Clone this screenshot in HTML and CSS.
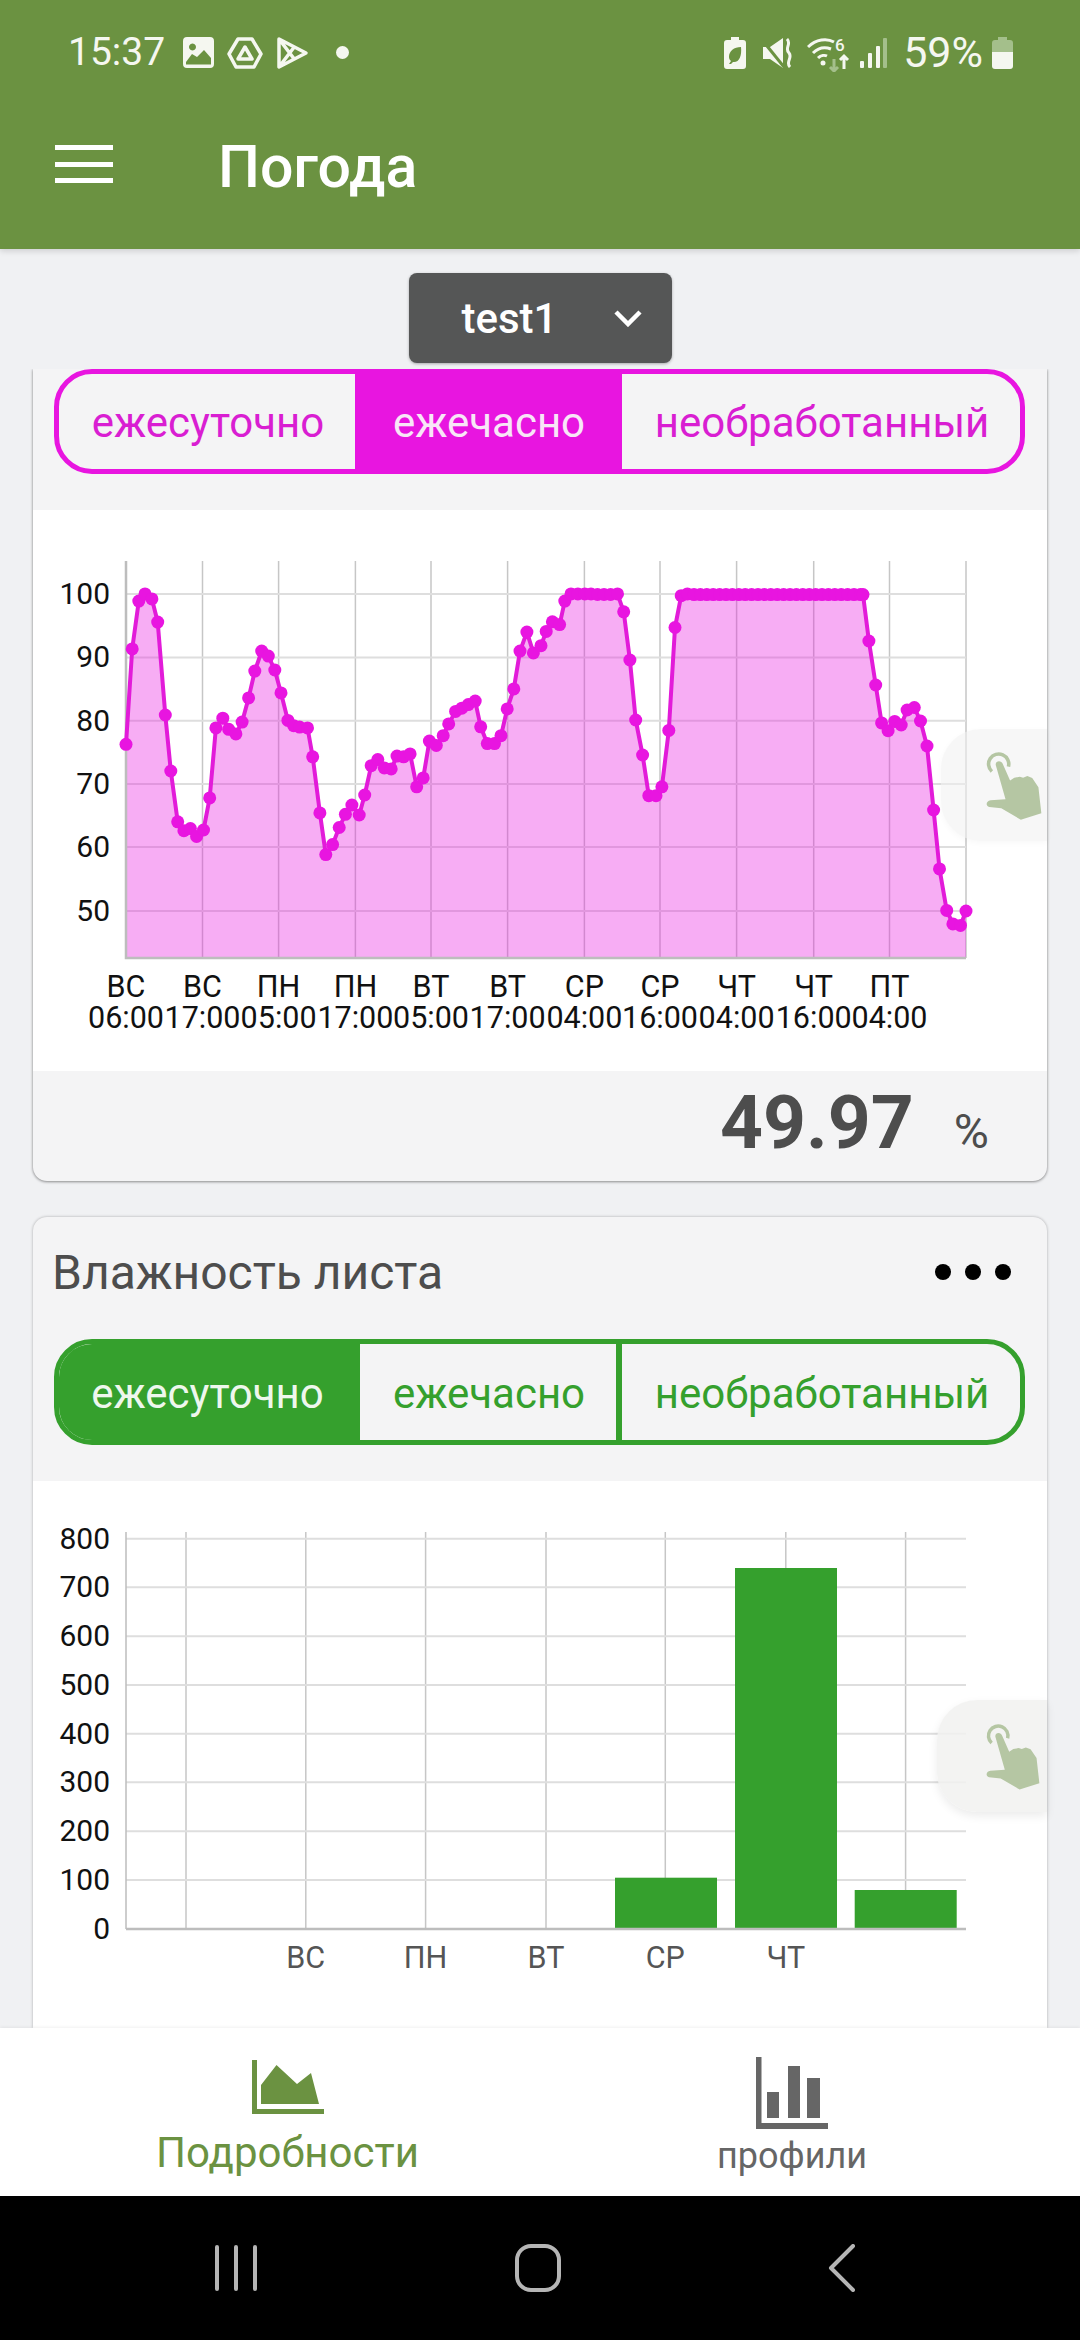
FILE: index.html
```html
<!DOCTYPE html>
<html lang="ru">
<head>
    <meta charset="UTF-8">
    <meta name="viewport" content="width=device-width, initial-scale=1.0">
    <title>Погода</title>
    <link rel="stylesheet" href="styles.css">
</head>
<body>
    <svg class="defs" width="0" height="0">
        <defs>
            <marker id="dot" markerUnits="userSpaceOnUse" markerWidth="14" markerHeight="14" refX="7" refY="7">
                <circle cx="7" cy="7" r="6.500" fill="#e815e0"/>
            </marker>
            <symbol id="hand" viewBox="155 145 175 220">
                <path d="M176 212A31 31 0 1 1 227 197" fill="none" stroke="currentColor" stroke-width="11"/>
                <path d="M188 192C186 178 206 176 210 190L232 240L245 231L262 228L272 231L285 226L300 232L319 260L328 340L265 360L205 325L168 321C156 318 158 302 172 300L218 297Z" fill="currentColor"/>
            </symbol>
        </defs>
    </svg>

    <div class="page">
        <header class="app-header">
            <div class="status-bar">
                <div class="status-left">
                    <span class="clock">15:37</span>
                    <svg class="st-icon" width="31" height="31" viewBox="0 0 31 31"><path fill-rule="evenodd" d="M4 0H27A4 4 0 0 1 31 4V27A4 4 0 0 1 27 31H4A4 4 0 0 1 0 27V4A4 4 0 0 1 4 0ZM3 25V27.500H28V21L21 13L14 20L9 17ZM9.500 6.500A3.500 3.500 0 1 0 9.510 6.500Z"/></svg>
                    <svg class="st-line" width="36" height="32" viewBox="0 0 36 32"><path d="M11 2H25L34 17L27 30H9L2 17Z M18 10L25 22H11Z"/></svg>
                    <svg class="st-line play" width="33" height="34" viewBox="0 0 33 34"><path d="M3 3L30 17L3 31Z M3 3L19 24 M3 31L19 10"/></svg>
                    <span class="st-dot"></span>
                </div>
                <div class="status-right">
                    <svg class="st-icon leaf" width="22" height="32" viewBox="0 0 22 32"><path fill-rule="evenodd" d="M7 0H15V3H19A3 3 0 0 1 22 6V29A3 3 0 0 1 19 32H3A3 3 0 0 1 0 29V6A3 3 0 0 1 3 3H7ZM17 10C10 10 5 14 5 20C5 22 6 23 7 24L5 27L7 27L9 25C15 26 18 19 17 10Z"/></svg>
                    <svg class="st-icon" width="30" height="30" viewBox="0 0 30 30"><path d="M0 9H7L20 0V30L7 21H0Z"/><path d="M0 3L21 29" stroke="#6b9241" stroke-width="3"/><path d="M24 1C29 6 21 10 26 15C30 20 22 24 27 29" fill="none" stroke="#f5f7f0" stroke-width="3"/></svg>
                    <svg class="wifi" width="43" height="38" viewBox="0 -4 43 38"><path class="wifi-arc" d="M1 9C9 1 20 0 27 4M6 15C12 9 19 9 24 11M11 20C14 17 18 17 20 18"/><circle class="wifi-dot" cx="16" cy="25" r="2.500"/><text class="wifi-six" x="28" y="13">6</text><path class="wifi-up" d="M37 31V18M33 22L37 18L41 22"/><path class="wifi-down" d="M27 33V21M23 29L27 33L31 29"/></svg>
                    <svg class="signal" width="27" height="30" viewBox="0 0 27 30"><rect x="0" y="23" width="4" height="7" rx="1"/><rect x="8" y="15" width="4" height="15" rx="1"/><rect x="16" y="8" width="4" height="22" rx="1"/><rect class="signal-off" x="23" y="0" width="4" height="30" rx="1"/></svg>
                    <span class="battery-text">59%</span>
                    <svg class="battery" width="21" height="32" viewBox="0 0 21 32"><path class="battery-off" d="M6 0H15V3H18A3 3 0 0 1 21 6V15H0V6A3 3 0 0 1 3 3H6Z"/><path class="battery-on" d="M0 15H21V29A3 3 0 0 1 18 32H3A3 3 0 0 1 0 29Z"/></svg>
                </div>
            </div>
            <div class="toolbar">
                <div class="menu-icon"><span></span><span></span><span></span></div>
                <h1 class="app-title">Погода</h1>
            </div>
        </header>

        <div class="picker-row">
            <div class="picker">
                <span>test1</span>
                <svg width="30" height="18" viewBox="0 0 30 18"><path d="M3 3L15 15L27 3" fill="none" stroke="#fff" stroke-width="4.500"/></svg>
            </div>
        </div>

        <main class="scroll-area">
            <section class="card card-first">
                <div class="segments seg-pink">
                    <button class="seg">ежесуточно</button>
                    <button class="seg active">ежечасно</button>
                    <button class="seg">необработанный</button>
                </div>
                <div class="chart-box chart-box-line">
                    <svg class="chart" width="1014" height="561" viewBox="33 510 1014 561">
                        <path class="grid-v" d="M202.500 561V958M278.600 561V958M355.400 561V958M431 561V958M507.600 561V958M584.400 561V958M660 561V958M736.600 561V958M813.700 561V958M889.500 561V958M966 561V958"/>
                        <path class="grid-h" d="M126 594H966M126 657.500H966M126 720.700H966M126 784H966M126 847H966M126 911H966"/>
                        <polygon class="area" points="126,958 126,744.300 132.200,648.900 138.800,601.100 145,593.900 151.900,598.900 157.700,622.100 165.300,715 170.800,771 177.700,821.800 183.900,830.700 190.400,828.600 196.600,836.400 203.500,830 209.700,797.900 215.900,727.900 222.800,718.200 228.700,729.300 235.900,733.900 242.100,722.100 248.600,697.900 254.800,671.100 261.700,651.100 268.300,656.100 274.800,670 281,692.900 287.900,720.400 293.700,725.700 299.600,727.100 307.500,727.900 312.700,756.800 319.900,812.900 325.800,854.600 332.600,844.600 339.200,827.500 345.400,814.300 351.900,805 359.200,815 364.700,795 371.200,765.700 377.800,759.600 384.300,767.900 391.200,768.900 397,756.100 403.600,756.800 410.100,753.900 416.700,786.800 423.200,777.900 429.400,741.100 436.300,745.400 443.200,735.700 448.700,723.900 455.600,711.400 461.800,708.200 468.300,704.600 475.200,701.100 480.700,726.800 487.300,743.600 494.500,743.600 501,735.700 507.200,708.900 513.800,688.900 520,651.100 526.900,632.100 533.400,652.900 541,645.700 546.200,631.400 552.400,621.800 559.600,624.600 564.800,601.100 571,593.900 577.900,593.900 584.800,593.900 591,594 597.500,594.500 604,594.500 610.600,594.500 617.500,593.900 623.700,611.800 629.900,660 635.700,720 642.600,755 648.800,795.700 656,795.700 661.900,786.800 668.800,730.400 675,627.500 681.200,595.700 687.400,593.900 863,594.600 868.900,641 875.700,685 881.600,722.900 888.100,730.700 894.700,721.400 901.200,725 907.100,710 914.300,707.500 920.500,721 927,746 933.600,810 939.500,868.900 946.700,910.400 952.900,923.900 960.500,925.400 966,911 966,958"/>
                        <path class="axis" d="M126 561V958H966"/>
                        <polyline class="line" points="126,744.300 132.200,648.900 138.800,601.100 145,593.900 151.900,598.900 157.700,622.100 165.300,715 170.800,771 177.700,821.800 183.900,830.700 190.400,828.600 196.600,836.400 203.500,830 209.700,797.900 215.900,727.900 222.800,718.200 228.700,729.300 235.900,733.900 242.100,722.100 248.600,697.900 254.800,671.100 261.700,651.100 268.300,656.100 274.800,670 281,692.900 287.900,720.400 293.700,725.700 299.600,727.100 307.500,727.900 312.700,756.800 319.900,812.900 325.800,854.600 332.600,844.600 339.200,827.500 345.400,814.300 351.900,805 359.200,815 364.700,795 371.200,765.700 377.800,759.600 384.300,767.900 391.200,768.900 397,756.100 403.600,756.800 410.100,753.900 416.700,786.800 423.200,777.900 429.400,741.100 436.300,745.400 443.200,735.700 448.700,723.900 455.600,711.400 461.800,708.200 468.300,704.600 475.200,701.100 480.700,726.800 487.300,743.600 494.500,743.600 501,735.700 507.200,708.900 513.800,688.900 520,651.100 526.900,632.100 533.400,652.900 541,645.700 546.200,631.400 552.400,621.800 559.600,624.600 564.800,601.100 571,593.900 577.900,593.900 584.800,593.900 591,594 597.500,594.500 604,594.500 610.600,594.500 617.500,593.900 623.700,611.800 629.900,660 635.700,720 642.600,755 648.800,795.700 656,795.700 661.900,786.800 668.800,730.400 675,627.500 681.200,595.700 687.400,593.900 694,594.600 700.400,594.600 706.800,594.600 713.200,594.600 719.600,594.600 726,594.600 732.400,594.600 738.800,594.600 745.200,594.600 751.600,594.600 758,594.600 764.400,594.600 770.800,594.600 777.200,594.600 783.600,594.600 790,594.600 796.400,594.600 802.800,594.600 809.200,594.600 815.600,594.600 822,594.600 828.400,594.600 834.800,594.600 841.200,594.600 847.600,594.600 854,594.600 860.400,594.600 863,594.600 868.900,641 875.700,685 881.600,722.900 888.100,730.700 894.700,721.400 901.200,725 907.100,710 914.300,707.500 920.500,721 927,746 933.600,810 939.500,868.900 946.700,910.400 952.900,923.900 960.500,925.400 966,911"/>
                        <g class="y-labels">
                            <text x="110" y="604">100</text><text x="110" y="667">90</text><text x="110" y="731">80</text><text x="110" y="794">70</text><text x="110" y="857">60</text><text x="110" y="921">50</text>
                        </g>
                        <g class="x-labels">
                            <text x="126" y="997">ВС</text><text x="126" y="1028">06:00</text>
                            <text x="202.500" y="997">ВС</text><text x="202.500" y="1028">17:00</text>
                            <text x="278.600" y="997">ПН</text><text x="278.600" y="1028">05:00</text>
                            <text x="355.400" y="997">ПН</text><text x="355.400" y="1028">17:00</text>
                            <text x="431" y="997">ВТ</text><text x="431" y="1028">05:00</text>
                            <text x="507.600" y="997">ВТ</text><text x="507.600" y="1028">17:00</text>
                            <text x="584.400" y="997">СР</text><text x="584.400" y="1028">04:00</text>
                            <text x="660" y="997">СР</text><text x="660" y="1028">16:00</text>
                            <text x="736.600" y="997">ЧТ</text><text x="736.600" y="1028">04:00</text>
                            <text x="813.700" y="997">ЧТ</text><text x="813.700" y="1028">16:00</text>
                            <text x="889.500" y="997">ПТ</text><text x="889.500" y="1028">04:00</text>
                        </g>
                    </svg>
                    <div class="hand-tab hand-tab-1"><svg width="57" height="73"><use href="#hand"/></svg></div>
                </div>
                <div class="card-footer">
                    <span class="value">49.97</span>
                    <span class="unit">%</span>
                </div>
            </section>

            <section class="card card-second">
                <div class="card-head">
                    <h2>Влажность листа</h2>
                    <div class="dots"><span></span><span></span><span></span></div>
                </div>
                <div class="segments seg-green">
                    <button class="seg active">ежесуточно</button>
                    <button class="seg">ежечасно</button>
                    <button class="seg">необработанный</button>
                </div>
                <div class="chart-box chart-box-bar">
                    <svg class="chart" width="1014" height="547" viewBox="33 1481 1014 547">
                        <path class="grid-v" d="M186 1532V1929M305.800 1532V1929M425.600 1532V1929M546 1532V1929M665.300 1532V1929M785.800 1532V1929M905.600 1532V1929"/>
                        <path class="grid-h" d="M126 1538.700H966M126 1587.300H966M126 1636.300H966M126 1685H966M126 1733.700H966M126 1782.300H966M126 1831.300H966M126 1880H966"/>
                        <path class="axis axis-y" d="M126 1532V1929"/>
                        <rect class="bar" x="615" y="1877.700" width="102" height="51.300"/>
                        <rect class="bar" x="735" y="1568" width="102" height="361"/>
                        <rect class="bar" x="854.700" y="1890" width="102" height="39"/>
                        <path class="axis axis-x" d="M126 1929H966"/>
                        <g class="y-labels">
                            <text x="110" y="1549">800</text><text x="110" y="1597">700</text><text x="110" y="1646">600</text><text x="110" y="1695">500</text><text x="110" y="1744">400</text><text x="110" y="1792">300</text><text x="110" y="1841">200</text><text x="110" y="1890">100</text><text x="110" y="1939">0</text>
                        </g>
                        <g class="x-labels x-labels-gray">
                            <text x="305.800" y="1968">ВС</text><text x="425.600" y="1968">ПН</text><text x="546" y="1968">ВТ</text><text x="665.300" y="1968">СР</text><text x="785.800" y="1968">ЧТ</text>
                        </g>
                    </svg>
                    <div class="hand-tab hand-tab-2"><svg width="55" height="73"><use href="#hand"/></svg></div>
                </div>
            </section>
        </main>

        <nav class="bottom-nav">
            <a class="tab tab-active">
                <svg width="72" height="54" viewBox="0 0 72 54"><path d="M0 0H5V49H72V54H0Z"/><path d="M9 25L24.500 5L45 24L59 13L67 44H9Z"/></svg>
                <span>Подробности</span>
            </a>
            <a class="tab">
                <svg width="72" height="72" viewBox="0 0 72 72"><path d="M0 0H5.500V66H72V72H0Z"/><rect x="11" y="35" width="12" height="26"/><rect x="32" y="9" width="12" height="52"/><rect x="51" y="21" width="13" height="40"/></svg>
                <span>профили</span>
            </a>
        </nav>

        <div class="system-nav">
            <svg width="42" height="46" viewBox="0 0 42 46"><path d="M2 2V44M21 2V44M40 2V44"/></svg>
            <svg width="46" height="48" viewBox="0 0 46 48"><rect x="2" y="2" width="42" height="44" rx="14"/></svg>
            <svg width="27" height="48" viewBox="0 0 27 48"><path d="M25 2L3 24L25 46"/></svg>
        </div>
    </div>
</body>
</html>
```

FILE: styles.css
```css
* {
    box-sizing: border-box;
}
body {
    margin: 0;
    font-family: Roboto, "Noto Sans", sans-serif;
    background-color: #f0f1f3;
}
.defs {
    position: absolute;
}
.page {
    display: flex;
    flex-direction: column;
    width: 1080px;
    height: 2340px;
    overflow: hidden;
}

/* header */
.app-header {
    height: 249px;
    flex: none;
    background-color: #6b9241;
    color: #f5f7f0;
    box-shadow: 0 2px 6px rgba(0, 0, 0, 0.15);
    position: relative;
    z-index: 3;
}
.status-bar {
    display: flex;
    justify-content: space-between;
    align-items: center;
    height: 105px;
    padding: 0 67px 0 68px;
}
.status-left,
.status-right {
    display: flex;
    align-items: center;
}
.clock {
    font-size: 39px;
    line-height: 1;
    margin-right: 18px;
}
.battery-text {
    font-size: 43px;
    line-height: 1;
}
.status-left svg {
    margin-right: 13px;
}
.st-icon {
    fill: #f5f7f0;
}
.st-line {
    fill: none;
    stroke: #f5f7f0;
    stroke-width: 3.5;
    stroke-linejoin: round;
}
.status-left .play {
    margin-right: 27px;
}
.st-dot {
    width: 13px;
    height: 13px;
    border-radius: 50%;
    background-color: #f5f7f0;
}
.status-right svg {
    margin-right: 14px;
}
.status-right .leaf {
    margin-right: 17px;
}
.status-right .wifi {
    margin-right: 10px;
}
.status-right .signal {
    margin-right: 16px;
    fill: #f5f7f0;
}
.status-right .battery {
    margin: 0 0 0 9px;
}
.signal-off,
.battery-off {
    fill: #a4bf8b;
}
.battery-on {
    fill: #f5f7f0;
}
.wifi-arc,
.wifi-up {
    fill: none;
    stroke: #f5f7f0;
    stroke-width: 3;
}
.wifi-down {
    fill: none;
    stroke: #a4bf8b;
    stroke-width: 3;
}
.wifi-dot {
    fill: #f5f7f0;
}
.wifi-six {
    font-size: 17px;
    font-weight: 500;
    fill: #f5f7f0;
}
.toolbar {
    display: flex;
    align-items: center;
    height: 118px;
    padding-left: 55px;
}
.menu-icon {
    display: flex;
    flex-direction: column;
    justify-content: space-between;
    width: 58px;
    height: 38px;
    margin-right: 105px;
}
.menu-icon span {
    height: 5px;
    background-color: #fff;
}
.app-title {
    margin: 5px 0 0;
    font-size: 59px;
    font-weight: 500;
    color: #fff;
}

/* device picker */
.picker-row {
    display: flex;
    justify-content: center;
    height: 120px;
    flex: none;
    padding-top: 24px;
    position: relative;
    z-index: 2;
}
.picker {
    display: flex;
    align-items: center;
    justify-content: space-between;
    width: 263px;
    height: 90px;
    padding: 0 29px 0 53px;
    background-color: #555656;
    border-radius: 8px;
    box-shadow: 0 1px 3px rgba(0, 0, 0, 0.3);
    color: #fff;
    font-size: 42px;
    font-weight: 500;
}

/* cards */
.scroll-area {
    flex: 1;
    overflow: hidden;
    padding: 0 33px;
}
.card {
    background-color: #f4f4f5;
    box-shadow: 0 0 3px rgba(0, 0, 0, 0.3);
}
.card-first {
    border-radius: 0 0 14px 14px;
    clip-path: inset(0 -6px -6px -6px);
    box-shadow: 0 1px 3px rgba(0, 0, 0, 0.35), 0 0 3px rgba(0, 0, 0, 0.2);
    margin-bottom: 36px;
}
.card-second {
    border-radius: 14px 14px 0 0;
}
.card-footer {
    display: flex;
    justify-content: flex-end;
    align-items: baseline;
    gap: 40px;
    height: 110px;
    padding: 7px 58px 0 0;
    color: #4d4d4d;
    border-radius: 0 0 14px 14px;
}
.value {
    font-size: 75px;
    font-weight: 700;
}
.unit {
    font-size: 48px;
}
.card-head {
    display: flex;
    justify-content: space-between;
    align-items: center;
    height: 122px;
    padding: 0 36px 12px 19px;
}
.card-head h2 {
    margin: 0;
    font-size: 48px;
    font-weight: 400;
    color: #4d4d4d;
}
.dots {
    display: flex;
    gap: 14px;
}
.dots span {
    width: 16px;
    height: 16px;
    border-radius: 50%;
    background-color: #000;
}

/* segmented control */
.segments {
    display: grid;
    grid-template-columns: 301px 262px 1fr;
    height: 105px;
    margin: 0 22px 36px 21px;
    border-width: 5px;
    border-style: solid;
    border-radius: 38px;
    overflow: hidden;
}
.seg {
    padding: 2px 0 0 2px;
    border: none;
    border-right: 6px solid;
    background: none;
    font-family: inherit;
    font-size: 42px;
}
.seg:last-child {
    border-right: none;
}
.seg-pink {
    border-color: #e815e0;
}
.seg-pink .seg {
    border-color: #e815e0;
    color: #d91ed2;
}
.seg-pink .seg.active {
    background-color: #e815e0;
    color: #f8e6f7;
}
.seg-pink .seg:first-child {
    border-right-width: 5px;
}
.seg-green {
    height: 106px;
    border-color: #35a02d;
}
.seg-green .seg {
    border-color: #35a02d;
    color: #35a02d;
}
.seg-green .seg.active {
    background-color: #35a02d;
    color: #eef7ed;
}

/* charts */
.chart-box {
    position: relative;
    background-color: #fff;
}
.chart-box-line {
    height: 561px;
}
.chart-box-bar {
    height: 547px;
}
.chart {
    display: block;
}
.grid-v {
    fill: none;
    stroke: #c6c6c6;
    stroke-width: 1.5;
}
.grid-h {
    fill: none;
    stroke: #dedede;
    stroke-width: 2;
}
.axis {
    fill: none;
    stroke: #bdbdbd;
    stroke-width: 2.5;
}
.axis-y {
    stroke-width: 1.5;
}
.area {
    fill: #e815e0;
    fill-opacity: 0.35;
}
.line {
    fill: none;
    stroke: #e21bd9;
    stroke-width: 4;
    stroke-linejoin: round;
    marker-start: url(#dot);
    marker-mid: url(#dot);
    marker-end: url(#dot);
}
.bar {
    fill: #35a02d;
}
.y-labels text {
    font-size: 30px;
    text-anchor: end;
    fill: #111;
}
.x-labels text {
    font-size: 30.5px;
    text-anchor: middle;
    fill: #111;
}
.x-labels-gray text {
    fill: #555;
}

/* hand hint over the charts */
.hand-tab {
    position: absolute;
    right: 0;
    display: flex;
    align-items: center;
    border-radius: 40px 0 0 40px;
    color: #b5c6a3;
}
.hand-tab-1 {
    top: 219px;
    width: 106px;
    height: 112px;
    padding-left: 44px;
    background-color: rgba(241, 241, 240, 0.55);
    box-shadow: 0 2px 6px rgba(0, 0, 0, 0.03);
}
.hand-tab-2 {
    top: 219px;
    width: 110px;
    height: 112px;
    padding-left: 48px;
    background-color: rgba(241, 241, 240, 0.85);
    box-shadow: 0 4px 10px rgba(0, 0, 0, 0.08);
}

/* bottom navigation */
.bottom-nav {
    display: grid;
    grid-template-columns: 575px 434px;
    height: 168px;
    flex: none;
    background-color: #fff;
    box-shadow: 0 -1px 3px rgba(0, 0, 0, 0.06);
    position: relative;
    z-index: 2;
}
.tab {
    display: flex;
    flex-direction: column;
    align-items: center;
    justify-content: flex-end;
    padding-bottom: 19px;
    color: #666;
    fill: #666;
    font-size: 36px;
}
.tab svg {
    margin-bottom: 6px;
}
.tab-active {
    color: #6b9241;
    fill: #6b9241;
    font-size: 42px;
}
.tab-active svg {
    margin-bottom: 14px;
}

/* android nav */
.system-nav {
    display: flex;
    align-items: center;
    gap: 258px;
    height: 144px;
    flex: none;
    padding: 0 0 0 215px;
    background-color: #000;
}
.system-nav svg {
    fill: none;
    stroke: #b5b5b5;
    stroke-width: 4;
    stroke-linecap: round;
    stroke-linejoin: round;
}
.system-nav svg:last-child {
    margin-left: 9px;
}
```
